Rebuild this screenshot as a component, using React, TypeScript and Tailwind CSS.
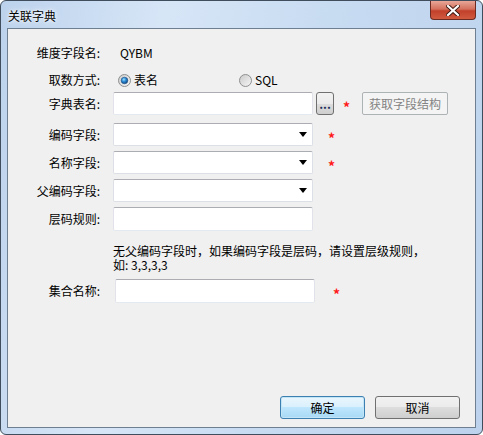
import React from 'react';

const font = { fontFamily: '"Noto Sans CJK SC", "Liberation Sans", sans-serif' };

function Radio({ checked }: { checked?: boolean }) {
  return (
    <svg width="13" height="13" viewBox="0 0 13 13" className="shrink-0">
      <defs>
        <linearGradient id={checked ? 'rg1' : 'rg0'} x1="0" y1="0" x2="1" y2="1">
          <stop offset="0" stopColor="#c9c9c9" />
          <stop offset="1" stopColor="#f7f7f7" />
        </linearGradient>
        <radialGradient id="dot" cx="0.4" cy="0.35" r="0.7">
          <stop offset="0" stopColor="#9fe1ff" />
          <stop offset="0.45" stopColor="#2a8ad4" />
          <stop offset="1" stopColor="#0f3e75" />
        </radialGradient>
      </defs>
      <circle cx="6.5" cy="6.5" r="6" fill={`url(#${checked ? 'rg1' : 'rg0'})`} stroke="#8e8f8f" strokeWidth="1" />
      {checked && <circle cx="6.5" cy="6.5" r="3.3" fill="url(#dot)" stroke="#1b4f86" strokeWidth="0.6" />}
    </svg>
  );
}

function TextBox() {
  return (
    <div className="h-full w-[200px] rounded-[2px] border border-[#e2e3ea] border-t-[#abadb3] border-b-[#e3e9ef] bg-white" />
  );
}

function Combo() {
  return (
    <div className="flex h-full w-[200px] items-center justify-end rounded-[2px] border border-[#dcdfe5] border-t-[#abadb3] bg-white pr-[5px]">
      <svg width="8" height="5" viewBox="0 0 8 5">
        <path d="M0 0H8L4 5Z" fill="#000" />
      </svg>
    </div>
  );
}

// red "required" mark, nudged down so it sits on the row's middle
function Star({ className = '' }: { className?: string }) {
  return (
    <span className={`translate-y-[3px] text-[14px] font-bold leading-none text-[#ff1a1a] ${className}`}>*</span>
  );
}

function Label({ children }: { children: React.ReactNode }) {
  return <div className="w-[92px] shrink-0 text-right">{children}</div>;
}

export default function App() {
  return (
    <div style={font} className="h-[435px] w-[483px] text-[12px] text-black">
      <div className="flex h-full w-full flex-col rounded-[6px] border border-[#3f4d5c] bg-[linear-gradient(100deg,#bcd2ec_0%,#d7e6f7_30%,#c7dbf1_60%,#bdd3ed_100%)]">
        {/* title bar */}
        <div className="flex h-[27px] shrink-0 items-start">
          <div className="ml-[7px] mt-[8px] text-[12px] leading-[14px] [text-shadow:0_0_6px_#ffffff,0_0_3px_#ffffff]">
            关联字典
          </div>
          <div className="ml-auto mr-[6px] flex h-[19px] w-[46px] items-center justify-center rounded-b-[4px] border border-t-0 border-[#6b2a22] bg-[linear-gradient(to_bottom,#e8a698_0%,#d4715d_45%,#c1402a_55%,#d05b3f_100%)]">
            <svg width="14" height="11" viewBox="0 0 14 11">
              <path d="M2 1L7 5.5M12 1L7 5.5M2 10L7 5.5M12 10L7 5.5" stroke="#3b1710" strokeWidth="4" strokeLinecap="square" />
              <path d="M2 1L12 10M12 1L2 10" stroke="#ffffff" strokeWidth="2.2" strokeLinecap="square" />
            </svg>
          </div>
        </div>

        {/* client area */}
        <div className="mx-[6px] mb-[6px] flex flex-1 flex-col border border-[#6e7f92] bg-[#f0f0f0]">
          <div className="mt-[13px] flex h-[22px] items-center">
            <Label>维度字段名:</Label>
            <div className="ml-[20px]">QYBM</div>
          </div>

          <div className="mt-[5px] flex h-[22px] items-center">
            <Label>取数方式:</Label>
            <div className="ml-[18px] flex items-center gap-[3px]">
              <Radio checked />
              <span>表名</span>
            </div>
            <div className="ml-[81px] flex items-center gap-[3px]">
              <Radio />
              <span>SQL</span>
            </div>
          </div>

          <div className="mt-[1px] flex h-[23px] items-center">
            <Label>字典表名:</Label>
            <div className="ml-[13px] h-full">
              <TextBox />
            </div>
            <div className="ml-[3px] flex h-full w-[18px] items-center justify-center rounded-[3px] border border-[#707070] bg-[linear-gradient(to_bottom,#f2f2f2_0%,#ebebeb_50%,#dddddd_50%,#cfcfcf_100%)] text-[12px] font-bold leading-none text-[#1b2f5a]">
              ...
            </div>
            <Star className="ml-[9px]" />
            <div className="ml-[12px] flex h-full w-[86px] items-center justify-center rounded-[2px] border border-[#adb2b5] bg-[#f4f4f4] text-[#838383]">
              获取字段结构
            </div>
          </div>

          <div className="mt-[8px] flex h-[23px] items-center">
            <Label>编码字段:</Label>
            <div className="ml-[13px] h-full">
              <Combo />
            </div>
            <Star className="ml-[15px]" />
          </div>

          <div className="mt-[5px] flex h-[23px] items-center">
            <Label>名称字段:</Label>
            <div className="ml-[13px] h-full">
              <Combo />
            </div>
            <Star className="ml-[15px]" />
          </div>

          <div className="mt-[5px] flex h-[23px] items-center">
            <Label>父编码字段:</Label>
            <div className="ml-[13px] h-full">
              <Combo />
            </div>
          </div>

          <div className="mt-[5px] flex h-[24px] items-center">
            <Label>层码规则:</Label>
            <div className="ml-[13px] h-full">
              <TextBox />
            </div>
          </div>

          <div className="ml-[105px] mt-[13px] leading-[14px]">
            <div>无父编码字段时，如果编码字段是层码，请设置层级规则，</div>
            <div>如: 3,3,3,3</div>
          </div>

          <div className="mt-[7px] flex h-[24px] items-center">
            <Label>集合名称:</Label>
            <div className="ml-[15px] h-full">
              <TextBox />
            </div>
            <Star className="ml-[18px]" />
          </div>

          <div className="mb-[8px] mr-[15px] mt-auto flex justify-end gap-[10px]">
            <div className="flex h-[23px] w-[85px] items-center justify-center rounded-[3px] border border-[#3c7fb1] bg-[linear-gradient(to_bottom,#eaf6fd_0%,#d9f0fc_50%,#bee6fd_50%,#a7d9f5_100%)] shadow-[inset_0_0_0_1px_#c4e5f6]">
              确定
            </div>
            <div className="flex h-[23px] w-[85px] items-center justify-center rounded-[3px] border border-[#707070] bg-[linear-gradient(to_bottom,#f2f2f2_0%,#ebebeb_50%,#dddddd_50%,#cfcfcf_100%)]">
              取消
            </div>
          </div>
        </div>
      </div>
    </div>
  );
}
